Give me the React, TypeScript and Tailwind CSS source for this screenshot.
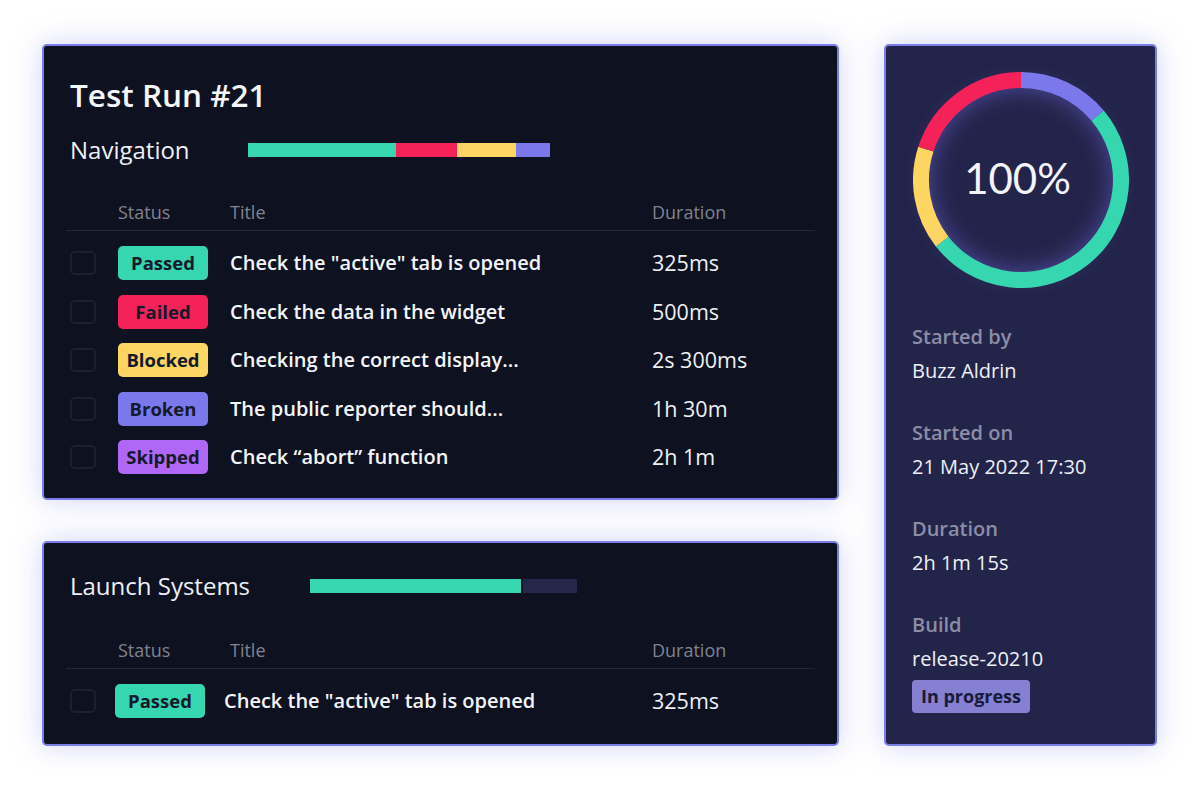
import React from 'react';

type Status = 'Passed' | 'Failed' | 'Blocked' | 'Broken' | 'Skipped';

interface TestRow {
  status: Status;
  title: string;
  duration: string;
}

const badgeStyles: Record<Status, string> = {
  Passed: 'bg-[#36d6b1]',
  Failed: 'bg-[#f5225a]',
  Blocked: 'bg-[#fdd563]',
  Broken: 'bg-[#7b78ec]',
  Skipped: 'bg-[#b067f5]',
};

const navigationRows: TestRow[] = [
  { status: 'Passed', title: 'Check the "active" tab is opened', duration: '325ms' },
  { status: 'Failed', title: 'Check the data in the widget', duration: '500ms' },
  { status: 'Blocked', title: 'Checking the correct display...', duration: '2s 300ms' },
  { status: 'Broken', title: 'The public reporter should...', duration: '1h 30m' },
  { status: 'Skipped', title: 'Check \u201cabort\u201d function', duration: '2h 1m' },
];

const font = { fontFamily: '"Open Sans", "Noto Sans", sans-serif' };

const cardClass =
  'rounded-[5px] border-2 border-[#7b7ee9] shadow-[0_0_28px_rgba(124,127,240,0.35)]';

const Checkbox = () => (
  <div className="h-6 w-[26px] shrink-0 rounded-[5px] border-2 border-[#1c2030]" />
);

const Badge = ({ status }: { status: Status }) => (
  <div
    className={`flex h-[34px] w-[90px] shrink-0 items-center justify-center rounded-[5px] text-[18.5px] font-bold text-[#131a2a] ${badgeStyles[status]}`}
  >
    {status}
  </div>
);

const TableHeader = () => (
  <div className="flex h-[31px] items-start border-b border-[#232738] text-[18px] leading-6 text-[#80838f]">
    <span className="ml-[52px] w-[112px]">Status</span>
    <span className="w-[422px]">Title</span>
    <span>Duration</span>
  </div>
);

const Row = ({ row, compact }: { row: TestRow; compact?: boolean }) => (
  <div className="flex h-[48.5px] items-center">
    <div className="ml-1">
      <Checkbox />
    </div>
    <div className={compact ? 'ml-[19px] w-[109px]' : 'ml-[22px] w-[112px]'}>
      <Badge status={row.status} />
    </div>
    <span
      className={`${compact ? 'w-[428px]' : 'w-[422px]'} text-[20px] font-semibold text-[#f4f5f8]`}
    >
      {row.title}
    </span>
    <span className="text-[21.5px] text-[#eef0f4]">{row.duration}</span>
  </div>
);

const ProgressDonut = () => {
  const cx = 108;
  const cy = 108;
  const r = 100;
  const arc = (from: number, to: number) => {
    const a0 = ((from - 90) * Math.PI) / 180;
    const a1 = ((to - 90) * Math.PI) / 180;
    const x0 = cx + r * Math.cos(a0);
    const y0 = cy + r * Math.sin(a0);
    const x1 = cx + r * Math.cos(a1);
    const y1 = cy + r * Math.sin(a1);
    const large = to - from > 180 ? 1 : 0;
    return `M ${x0} ${y0} A ${r} ${r} 0 ${large} 1 ${x1} ${y1}`;
  };
  const segments = [
    { from: 0, to: 50, color: '#7b78ec' },
    { from: 50, to: 232, color: '#36d6b1' },
    { from: 232, to: 288, color: '#fdd563' },
    { from: 288, to: 360, color: '#f5225a' },
  ];
  return (
    <div className="relative h-[216px] w-[216px]">
      <div className="absolute inset-[14px] rounded-full shadow-[inset_0_0_26px_rgba(130,120,255,0.55),0_0_24px_rgba(130,120,255,0.4)]" />
      <svg width="216" height="216" viewBox="0 0 216 216" className="absolute inset-0">
        {segments.map(s => (
          <path key={s.from} d={arc(s.from, s.to)} stroke={s.color} strokeWidth="16" fill="none" />
        ))}
      </svg>
      <div
        className="absolute inset-0 flex items-center justify-center pb-1 pr-[6px] text-[42px] text-[#f3f4f8]"
        style={{ fontFamily: 'Lato, "Open Sans", sans-serif' }}
      >
        100%
      </div>
    </div>
  );
};

const InfoItem = ({ label, value }: { label: string; value: string }) => (
  <div className="flex flex-col">
    <span className="text-[20px] font-semibold leading-[34px] text-[#8c8da6]">{label}</span>
    <span className="text-[20px] leading-[34px] text-[#eef0f6]">{value}</span>
  </div>
);

export default function App() {
  return (
    <div className="h-[800px] w-[1200px] bg-white" style={font}>
      <div className="flex gap-[45px] pl-[42px] pt-[44px]">
        <div className="flex w-[797px] flex-col gap-[41px]">
          {/* Test run card */}
          <div className={`${cardClass} h-[456px] bg-[#0d1120] pt-[31px]`}>
            <h1 className="pl-[26px] text-[31.5px] font-semibold leading-9 text-[#f5f6f9]">
              Test Run #21
            </h1>
            <div className="mt-[21px] flex h-8 items-center pl-[26px]">
              <span className="w-[178px] text-[24px] text-[#eef0f5]">Navigation</span>
              <div className="flex h-[14px] w-[302px]">
                <div className="w-[148px] bg-[#36d6b1]" />
                <div className="w-[61px] bg-[#f5225a]" />
                <div className="w-[59px] bg-[#fdd563]" />
                <div className="w-[34px] bg-[#7b78ec]" />
              </div>
            </div>
            <div className="mx-[22px] mt-[34px]">
              <TableHeader />
              <div className="pt-2">
                {navigationRows.map(row => (
                  <Row key={row.title} row={row} />
                ))}
              </div>
            </div>
          </div>

          {/* Launch systems card */}
          <div className={`${cardClass} h-[205px] bg-[#0d1120] pt-[27px]`}>
            <div className="flex h-8 items-center pl-[26px]">
              <span className="w-[240px] text-[24px] text-[#eef0f5]">Launch Systems</span>
              <div className="flex h-[14px] w-[267px] gap-[2px]">
                <div className="w-[211px] bg-[#36d6b1]" />
                <div className="flex-1 bg-[#24264a]" />
              </div>
            </div>
            <div className="mx-[22px] mt-[36px]">
              <TableHeader />
              <div className="pt-2">
                <Row
                  compact
                  row={{ status: 'Passed', title: 'Check the "active" tab is opened', duration: '325ms' }}
                />
              </div>
            </div>
          </div>
        </div>

        {/* Summary card */}
        <div className={`${cardClass} flex h-[702px] w-[273px] flex-col bg-[#23244a]`}>
          <div className="mt-[26px] flex justify-center">
            <ProgressDonut />
          </div>
          <div className="mt-[32px] flex flex-col gap-[28px] pl-[26px]">
            <InfoItem label="Started by" value="Buzz Aldrin" />
            <InfoItem label="Started on" value="21 May 2022 17:30" />
            <InfoItem label="Duration" value="2h 1m 15s" />
            <div className="flex flex-col">
              <span className="text-[20px] font-semibold leading-[34px] text-[#8c8da6]">Build</span>
              <span className="text-[20px] leading-[34px] text-[#eef0f6]">release-20210</span>
              <span className="mt-[4px] flex h-[33px] w-[118px] items-center justify-center rounded-[4px] bg-[#8580d2] text-[18px] font-bold text-[#181a3a]">
                In progress
              </span>
            </div>
          </div>
        </div>
      </div>
    </div>
  );
}
